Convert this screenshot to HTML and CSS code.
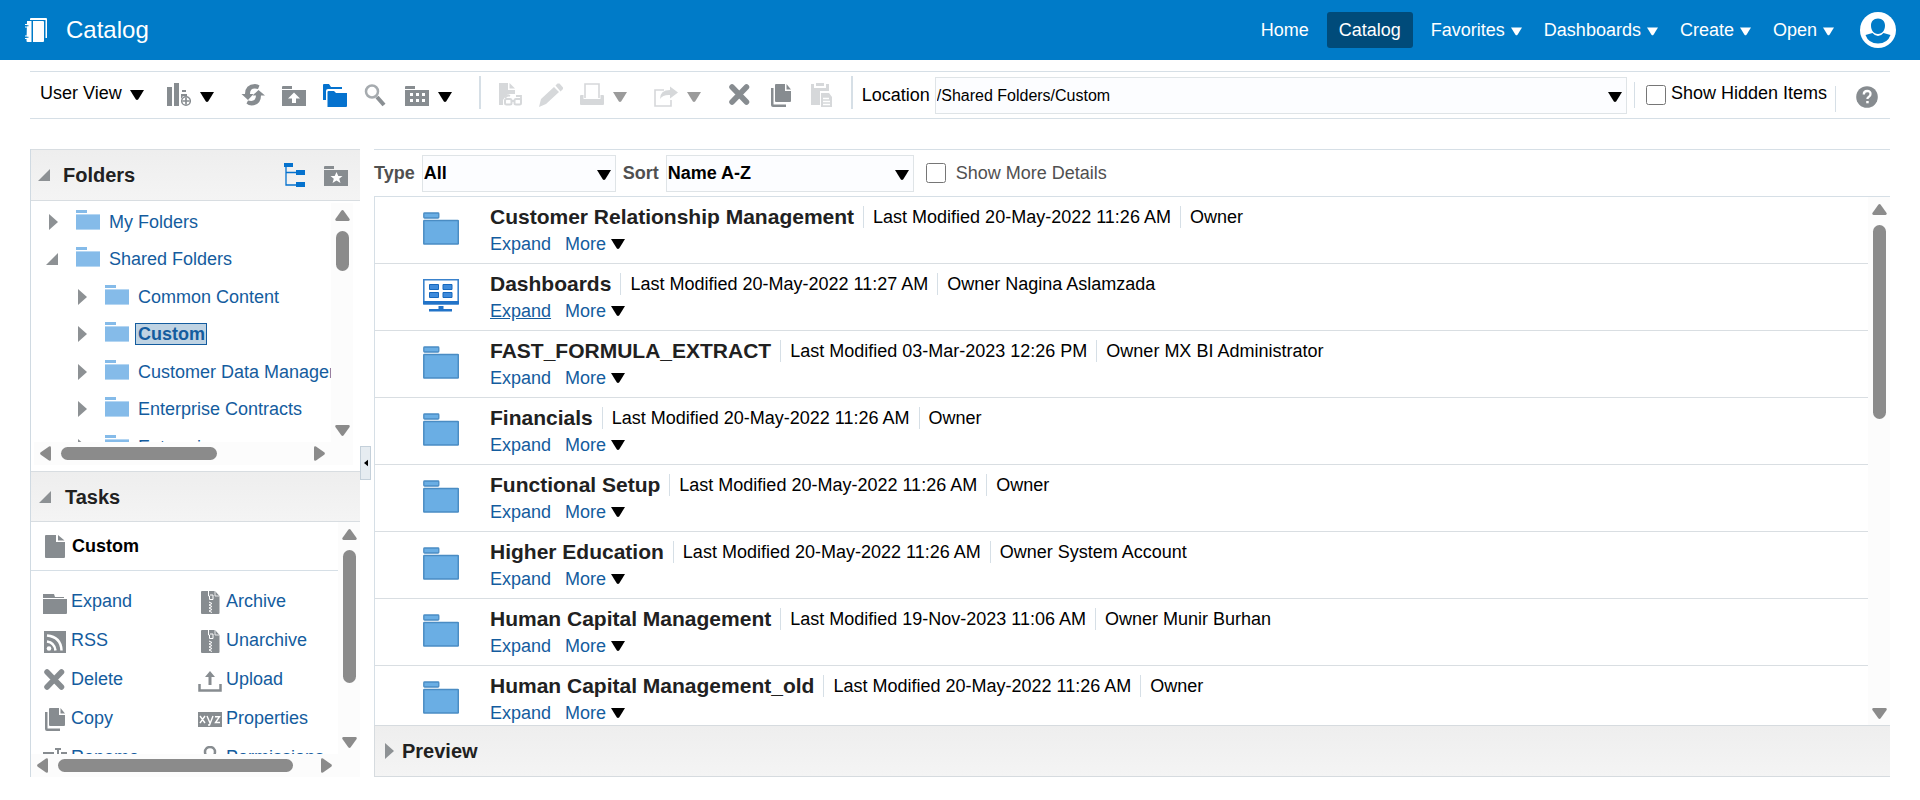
FILE: index.html
```html
<!DOCTYPE html>
<html lang="en">
<head>
<meta charset="utf-8">
<title>Catalog</title>
<link rel="stylesheet" href="styles.css">
</head>
<body>
<svg class="sprite" aria-hidden="true">
  <symbol id="caret" viewBox="0 0 14 10"><path d="M0 0h14L8.300 9.200Q7 10.600 5.700 9.200z"/></symbol>
  <symbol id="right" viewBox="0 0 10 18"><path d="M0 1v16L9 9z"/></symbol>
  <symbol id="open" viewBox="0 0 12 12"><path d="M12 0v12H0z"/></symbol>
  <symbol id="thumb-arrow" viewBox="0 0 15 11"><path d="M6.300.8Q7.500-.6 8.700.8L14.600 9Q15.200 10.900 13.500 11H1.500Q-.2 10.900.4 9z"/></symbol>
  <symbol id="tree-folder" viewBox="0 0 24 20"><path d="M0 0h11v3H0z" fill="#85bbe9"/><path d="M0 4h24v16H0z" fill="#b5d6f2"/><path d="M0 5h24v14H0z" fill="#85bbe9"/></symbol>
  <symbol id="big-folder" viewBox="0 0 36 33"><rect x=".8" y="1" width="15" height="5" rx=".8" fill="#6aaee4" stroke="#4a8cc3" stroke-width="1.300"/><rect x=".8" y="8.500" width="34.500" height="23.500" rx=".5" fill="#6aaee4" stroke="#4a8cc3" stroke-width="1.500"/></symbol>
  <symbol id="delete" viewBox="0 0 24 24"><path d="M4 4l14.500 15m0-15L4 19" stroke="currentColor" stroke-width="5.500" fill="none" stroke-linecap="round"/></symbol>
  <symbol id="copy" viewBox="0 0 24 24"><path d="M6 2q0-1 1-1h9v7h6v10q0 1-1 1H7q-1 0-1-1z"/><path d="M17.500 1l4.500 5.500h-4.500z"/><path d="M2 5h2.500v16.500H17V24H4q-2 0-2-2z"/></symbol>
  <symbol id="zip" viewBox="0 0 24 24"><path d="M4 1h13l4.500 5v17q0 1-1 1H4q-1 0-1-1V2q0-1 1-1z"/><path d="M10.500 1v5h1v3.500h3.500V5h-3" stroke="#fff" fill="none"/><path d="M17 1v5h4.500" stroke="#fff" fill="none" stroke-width=".8"/><path d="M11 12l3 1.500-3 1.500 3 1.500-3 1.500 3 1.500-3 1.500 3 1.500" stroke="#fff" fill="none"/></symbol>
</svg>

<header class="banner">
  <svg class="logo" viewBox="0 0 22 24" aria-hidden="true"><path d="M5 1q0-1 1-1h15q1 0 1 1v19h-1.500V2H5z"/><path d="M2 3h4.500v21H2.500q-1 0-1-1z"/><path d="M8 3h10q1 0 1 1v19q0 1-1 1H8z"/><path d="M0 6.500h4v2.500H0M0 18h4v2.500H0" fill="none" stroke="#fff" stroke-width="1.200"/><path d="M1 7.200h2.500v1H1zM1 18.700h2.500v1H1z" fill="#007bc8"/></svg>
  <h1>Catalog</h1>
  <nav class="nav">
    <a href="#">Home</a>
    <a href="#" class="current">Catalog</a>
    <a href="#" class="menu">Favorites <svg><use href="#caret"/></svg></a>
    <a href="#" class="menu">Dashboards <svg><use href="#caret"/></svg></a>
    <a href="#" class="menu">Create <svg><use href="#caret"/></svg></a>
    <a href="#" class="menu">Open <svg><use href="#caret"/></svg></a>
  </nav>
  <button class="avatar" aria-label="Account"><svg viewBox="0 0 36 36"><circle cx="18" cy="18" r="18" fill="#fff"/><path d="M18 6.500c-4.500 0-7 3-7 7 0 4.500 2.500 8.500 7 8.500s7-4 7-8.500c0-4-2.500-7-7-7zM5.500 23l7-2q2.500 3 5.500 3t5.500-3l7 2Q27.500 31.500 18 31.500T5.500 23z" fill="#007bc8"/></svg></button>
</header>

<div class="toolbar">
  <button class="tool view">User View <svg class="caret"><use href="#caret"/></svg></button>
  <button class="tool menu" aria-label="New"><svg class="icon" viewBox="0 0 24 24"><path d="M0 4h5v19H0zM7 0h5v23H7zM15 7h4v2h-4zM14 11h6v2h-4l-2 3z"/><circle cx="19" cy="18" r="4.300" fill="none" stroke="currentColor" stroke-width="1.500"/><path d="M19 14.500v7M15.500 18h7" stroke="currentColor" stroke-width="1.700"/></svg><svg class="caret"><use href="#caret"/></svg></button>
  <button class="tool" aria-label="Refresh"><svg class="icon" viewBox="0 0 24 24"><path d="M4 11Q4 1.500 14 1q3 0 4.500 1.500L17 6Q9 4 9 11h3.500L7 17 .5 11z"/><path d="M20 12.500Q20 22 10.500 22.500q-3 0-5-2L7 17.500q8 2 8-5h-3.500L17.500 7l6.500 5.500z"/></svg></button>
  <button class="tool" aria-label="Up"><svg class="icon" viewBox="0 0 24 24"><path d="M0 4q0-1 1-1h9v3H0zM0 7h24v16H0z"/><path d="M12 9.500l6 6h-4V20h-4v-4.500H6z" fill="#fff"/></svg></button>
  <button class="tool blue" aria-label="Show folders"><svg class="icon" viewBox="0 0 24 24"><path d="M0 2q0-1 1-1h5l2 3h11v2H5Q3 6 3 8v9H0z"/><path d="M4.500 9q0-1 1-1H11l2 2h11v13q0 1-1 1H4.500z"/></svg></button>
  <button class="tool" aria-label="Search"><svg class="icon" viewBox="0 0 24 24"><circle cx="8" cy="8.500" r="6" fill="none" stroke="#a6abaf" stroke-width="2.500"/><path d="M13 14l7 8" stroke="#8a8f93" stroke-width="4"/></svg></button>
  <button class="tool menu" aria-label="List view"><svg class="icon" viewBox="0 0 24 24"><path d="M0 4q0-1 1-1h9v3H0zM0 7h24v16H0z"/><path d="M5 10h3v3H5zm6 0h3v3h-3zm6 0h3v3h-3zM5 16h3v3H5zm6 0h3v3h-3zm6 0h3v3h-3z" fill="#fff"/></svg><svg class="caret"><use href="#caret"/></svg></button>
  <span class="rule tall"></span>
  <button class="tool" disabled aria-label="Open"><svg class="icon" viewBox="0 0 24 24"><path d="M1 0h9v7h7v4h-5q-3 0-5 3l-2 3v5H1z"/><path d="M11.500 0L17 5.500h-5.500z"/><path d="M7 15q2-3.500 5-2m11 4v-4h-5" fill="none" stroke="currentColor" stroke-width="1.800"/><rect x="7" y="16" width="6.500" height="5.500" rx="1.500" fill="#fff" stroke="currentColor" stroke-width="2"/><rect x="16.500" y="16" width="6.500" height="5.500" rx="1.500" fill="#fff" stroke="currentColor" stroke-width="2"/><path d="M13 17h4v2h-4z"/></svg></button>
  <button class="tool" disabled aria-label="Edit"><svg class="icon" viewBox="0 0 24 24"><path d="M0 24l2-8L15 4l5 5L7 21zM16.500 2.500l2-2h2l3.500 4v1.500l-2.500 2.500z"/></svg></button>
  <button class="tool menu" disabled aria-label="Print"><svg class="icon" viewBox="0 0 24 24"><path d="M5 15V1h14v14" fill="none" stroke="currentColor" stroke-width="1.600"/><path d="M1 12h2.500v4h17v-4H23q1 0 1 1v8q0 1-1 1h-2.500H1q-1 0-1-1v-8q0-1 1-1z"/></svg><svg class="caret"><use href="#caret"/></svg></button>
  <button class="tool menu" disabled aria-label="Export"><svg class="icon" viewBox="0 0 24 24"><path d="M10 7H1v16h16v-6" fill="none" stroke="currentColor" stroke-width="1.600"/><path d="M6 16q0-9 10-9V3.500l8 6-8 6V12q-7-.5-10 4z"/></svg><svg class="caret"><use href="#caret"/></svg></button>
  <button class="tool" aria-label="Delete"><svg class="icon"><use href="#delete"/></svg></button>
  <button class="tool" aria-label="Copy"><svg class="icon"><use href="#copy"/></svg></button>
  <button class="tool" disabled aria-label="Paste"><svg class="icon" viewBox="0 0 24 24"><path d="M1 1h3v4h12V1h3v7h-9v14H1z"/><path d="M6 0h8v3H6z"/><path d="M11 10h8l3 4v10H11z"/><path d="M13 15.500h6m-6 3h7m-7 3h7" stroke="#fff" stroke-width="1.300"/></svg></button>
  <span class="rule tall"></span>
  <label class="location" for="loc">Location</label>
  <span class="select grow"><select id="loc"><option>/Shared Folders/Custom</option></select><svg class="caret"><use href="#caret"/></svg></span>
  <span class="rule"></span>
  <label class="check hidden-items"><input type="checkbox"><span>Show Hidden Items</span></label>
  <span class="rule low"></span>
  <button class="help" aria-label="Help"><svg viewBox="0 0 22 22"><circle cx="11" cy="11" r="10.800" fill="#878c90"/><path d="M7.800 8.500Q7.800 5 11.200 5t3.300 3q0 1.800-1.600 2.700-1.500.8-1.500 2.300" fill="none" stroke="#fff" stroke-width="2.300"/><path d="M10.200 15h2.500v2.300h-2.500z" fill="#fff"/></svg></button>
</div>

<main class="workspace">
  <aside class="side">
    <div class="head">
      <svg class="open"><use href="#open"/></svg><h2>Folders</h2>
      <button class="tool blue" aria-label="Folder tree"><svg class="icon" viewBox="0 0 24 24"><path d="M1 0h9v4H1zM13 7h9v5h-9zM13 19h9v5h-9z"/><path d="M3 4v18h10M3 9.500h10" fill="none" stroke="currentColor" stroke-width="1.300"/></svg></button>
      <button class="tool" aria-label="Favorites"><svg class="icon" viewBox="0 0 24 24"><path d="M0 4q0-1 1-1h9v3H0zM0 7h24v16H0z"/><path d="M12.500 9l1.800 4h4.200l-3.300 2.800 1.300 4.200-4-2.500-4 2.500 1.300-4.200L6.500 13h4.200z" fill="#fff"/></svg></button>
    </div>
    <div class="scroller tree-box">
      <ul class="tree">
        <li><svg class="right"><use href="#right"/></svg><svg class="fold"><use href="#tree-folder"/></svg><a href="#">My Folders</a></li>
        <li><svg class="open"><use href="#open"/></svg><svg class="fold"><use href="#tree-folder"/></svg><a href="#">Shared Folders</a></li>
        <li class="child"><svg class="right"><use href="#right"/></svg><svg class="fold"><use href="#tree-folder"/></svg><a href="#">Common Content</a></li>
        <li class="child"><svg class="right"><use href="#right"/></svg><svg class="fold"><use href="#tree-folder"/></svg><a href="#" class="selected">Custom</a></li>
        <li class="child"><svg class="right"><use href="#right"/></svg><svg class="fold"><use href="#tree-folder"/></svg><a href="#">Customer Data Management</a></li>
        <li class="child"><svg class="right"><use href="#right"/></svg><svg class="fold"><use href="#tree-folder"/></svg><a href="#">Enterprise Contracts</a></li>
        <li class="child"><svg class="right"><use href="#right"/></svg><svg class="fold"><use href="#tree-folder"/></svg><a href="#">Enterprise</a></li>
      </ul>
      <div class="vbar"><svg><use href="#thumb-arrow"/></svg><div class="track"><div class="thumb" style="height:22%"></div></div><svg class="down"><use href="#thumb-arrow"/></svg></div>
      <div class="hbar"><svg class="left"><use href="#thumb-arrow"/></svg><div class="track"><div class="thumb" style="width:64%"></div></div><svg class="next"><use href="#thumb-arrow"/></svg></div>
    </div>
    <div class="head tasks-head"><svg class="open"><use href="#open"/></svg><h2>Tasks</h2></div>
    <div class="scroller">
      <div class="tasks">
        <h3><svg class="icon" viewBox="0 0 24 24"><path d="M2 1h10v7h9v15q0 1-1 1H2q-1 0-1-1V2q0-1 1-1z"/><path d="M14 1l6.500 5.500H14z"/></svg>Custom</h3>
        <ul class="actions">
          <li><svg class="icon" viewBox="0 0 24 24"><path d="M0 4h11l1 3h9v1H0zM0 9h24v14q0 1-1 1H0z"/></svg><a href="#">Expand</a></li>
          <li><svg class="icon"><use href="#zip"/></svg><a href="#">Archive</a></li>
          <li><svg class="icon" viewBox="0 0 24 24"><path d="M1 2h22v22H1z"/><circle cx="6" cy="19.500" r="2.300" fill="#fff"/><path d="M4 12.500q7.500 1 8.500 9M4 6.500q14 1.500 14.500 15" fill="none" stroke="#fff" stroke-width="2.500"/></svg><a href="#">RSS</a></li>
          <li><svg class="icon"><use href="#zip"/></svg><a href="#">Unarchive</a></li>
          <li><svg class="icon"><use href="#delete"/></svg><a href="#">Delete</a></li>
          <li><svg class="icon" viewBox="0 0 24 24"><path d="M12 3l5 6h-3.500v8h-3V9H7z"/><path d="M1.500 16v6.500h21V16" fill="none" stroke="currentColor" stroke-width="2.500"/></svg><a href="#">Upload</a></li>
          <li><svg class="icon"><use href="#copy"/></svg><a href="#">Copy</a></li>
          <li><svg class="icon" viewBox="0 0 24 24"><path d="M0 5h24v15H0z"/><path d="M2 9l5 7m0-7l-5 7M9 9l3 7m3-7l-3.500 9H10M17 9.700h4.500l-4 5.800H22" fill="none" stroke="#fff" stroke-width="1.400"/></svg><a href="#">Properties</a></li>
          <li><svg class="icon" viewBox="0 0 24 24"><path d="M0 6h11v2H2v9h9v2H0zM18 6h6v13h-6v-2h4V8h-4zM12 2h6v2h-2v17h2v1h-6v-1h2V4h-2z"/></svg><a href="#">Rename</a></li>
          <li><svg class="icon" viewBox="0 0 24 24"><circle cx="12" cy="6" r="5" fill="none" stroke="currentColor" stroke-width="2.500"/><path d="M5 11h14v12H5z"/></svg><a href="#">Permissions</a></li>
        </ul>
      </div>
      <div class="vbar"><svg><use href="#thumb-arrow"/></svg><div class="track"><div class="thumb" style="height:75%"></div></div><svg class="down"><use href="#thumb-arrow"/></svg></div>
      <div class="hbar"><svg class="left"><use href="#thumb-arrow"/></svg><div class="track"><div class="thumb" style="width:93%"></div></div><svg class="next"><use href="#thumb-arrow"/></svg></div>
    </div>
  </aside>

  <div class="splitter"><button aria-label="Collapse pane"><svg viewBox="0 0 5 8"><path d="M5 0v8L0 4z"/></svg></button></div>

  <section class="content">
    <div class="filters">
      <label for="type">Type</label>
      <span class="select type"><select id="type"><option>All</option></select><svg class="caret"><use href="#caret"/></svg></span>
      <label for="sort">Sort</label>
      <span class="select sort"><select id="sort"><option>Name A-Z</option></select><svg class="caret"><use href="#caret"/></svg></span>
      <label class="check details"><input type="checkbox"><span>Show More Details</span></label>
    </div>
    <div class="results">
      <ul class="list">
        <li><svg class="item"><use href="#big-folder"/></svg><div><p class="meta"><b>Customer Relationship Management</b><span>Last Modified 20-May-2022 11:26 AM</span><span>Owner</span></p><p class="links"><a href="#">Expand</a><a href="#">More <svg class="caret"><use href="#caret"/></svg></a></p></div></li>
        <li><svg class="item" viewBox="0 0 36 33"><path d="M.8.800h34.400v24H.8z" fill="#fff" stroke="#3a82cc" stroke-width="1.600"/><path d="M0 22h36v2.500q0 1-1 1H1q-1 0-1-1z" fill="#2173c8"/><path d="M15.500 27h5v3h8.500v2.500H6V30h9.500z" fill="#2173c8"/><path d="M6.500 5.500h9v5h-9zm13.500 0h9v5h-9zM6.500 13.500h9v5h-9zm13.500 0h9v5h-9z" fill="#3f8bdb" stroke="#1768bd"/></svg><div><p class="meta"><b>Dashboards</b><span>Last Modified 20-May-2022 11:27 AM</span><span>Owner Nagina Aslamzada</span></p><p class="links"><a href="#" class="active">Expand</a><a href="#">More <svg class="caret"><use href="#caret"/></svg></a></p></div></li>
        <li><svg class="item"><use href="#big-folder"/></svg><div><p class="meta"><b>FAST_FORMULA_EXTRACT</b><span>Last Modified 03-Mar-2023 12:26 PM</span><span>Owner MX BI Administrator</span></p><p class="links"><a href="#">Expand</a><a href="#">More <svg class="caret"><use href="#caret"/></svg></a></p></div></li>
        <li><svg class="item"><use href="#big-folder"/></svg><div><p class="meta"><b>Financials</b><span>Last Modified 20-May-2022 11:26 AM</span><span>Owner</span></p><p class="links"><a href="#">Expand</a><a href="#">More <svg class="caret"><use href="#caret"/></svg></a></p></div></li>
        <li><svg class="item"><use href="#big-folder"/></svg><div><p class="meta"><b>Functional Setup</b><span>Last Modified 20-May-2022 11:26 AM</span><span>Owner</span></p><p class="links"><a href="#">Expand</a><a href="#">More <svg class="caret"><use href="#caret"/></svg></a></p></div></li>
        <li><svg class="item"><use href="#big-folder"/></svg><div><p class="meta"><b>Higher Education</b><span>Last Modified 20-May-2022 11:26 AM</span><span>Owner System Account</span></p><p class="links"><a href="#">Expand</a><a href="#">More <svg class="caret"><use href="#caret"/></svg></a></p></div></li>
        <li><svg class="item"><use href="#big-folder"/></svg><div><p class="meta"><b>Human Capital Management</b><span>Last Modified 19-Nov-2023 11:06 AM</span><span>Owner Munir Burhan</span></p><p class="links"><a href="#">Expand</a><a href="#">More <svg class="caret"><use href="#caret"/></svg></a></p></div></li>
        <li><svg class="item"><use href="#big-folder"/></svg><div><p class="meta"><b>Human Capital Management_old</b><span>Last Modified 20-May-2022 11:26 AM</span><span>Owner</span></p><p class="links"><a href="#">Expand</a><a href="#">More <svg class="caret"><use href="#caret"/></svg></a></p></div></li>
      </ul>
      <div class="vbar"><svg><use href="#thumb-arrow"/></svg><div class="track"><div class="thumb" style="height:41%"></div></div><svg class="down"><use href="#thumb-arrow"/></svg></div>
    </div>
    <div class="preview"><svg class="right"><use href="#right"/></svg><h2>Preview</h2></div>
  </section>
</main>
</body>
</html>
```

FILE: styles.css
```css
* { box-sizing: border-box; }

body {
  margin: 0;
  height: 100vh;
  display: flex;
  flex-direction: column;
  padding-bottom: 23px;
  background: #fff;
  color: #000;
  font: 18px/20px "Liberation Sans", Arial, sans-serif;
}

h1, h2, h3, p, ul { margin: 0; padding: 0; list-style: none; }
a { color: #145c9e; text-decoration: none; }
svg { display: block; flex: none; fill: currentColor; }
button, select, input { font: inherit; color: inherit; margin: 0; }
button { padding: 0; border: 0; background: none; }
.sprite { position: absolute; width: 0; height: 0; }

/* Banner */
.banner {
  display: flex;
  align-items: center;
  flex: none;
  height: 60px;
  padding: 0 24px 0 25px;
  background: #007bc8;
  color: #fff;
}
.logo { width: 22px; height: 24px; }
.banner h1 { margin-left: 19px; font-size: 24px; line-height: 28px; font-weight: normal; }
.nav { display: flex; gap: 6px; margin-left: auto; margin-right: 22px; }
.nav a {
  display: flex;
  align-items: center;
  gap: 6px;
  height: 36px;
  padding: 0 12px;
  border-radius: 3px;
  color: #fff;
}
.nav .current { background: #004b7a; }
.nav .menu { padding: 0 4px 0 12px; }
.nav svg { width: 11px; height: 9px; margin-top: 2px; }
.avatar svg { width: 36px; height: 36px; }

/* Toolbar */
.toolbar {
  display: flex;
  align-items: center;
  flex: none;
  gap: 17px;
  height: 48px;
  margin: 11px 30px 30px;
  padding-left: 10px;
  border: solid #d6dfe6;
  border-width: 1px 0;
}
.icon { width: 24px; height: 24px; }
.caret { width: 14px; height: 10px; color: #000; }
.tool { display: flex; align-items: center; color: #878c90; }
.tool:disabled { color: #d6d8da; }
.tool:disabled .caret { color: #9b9b9b; }
.tool.view { gap: 8px; margin-right: 6px; padding-bottom: 4px; color: #000; }
.tool.view .caret { margin-top: 4px; }
.tool.menu { gap: 9px; margin-right: 10px; }
.tool.menu .caret { margin-top: 4px; }
.tool.blue { color: #0572ce; }
.rule { width: 1px; height: 26px; background: #d6dfe6; }
.rule.tall { width: 2px; height: 33px; margin-top: -5px; }
.rule.low { margin: 8px 3px 0 -9px; }
.location { margin-left: -8px; margin-right: -12px; }

.select { display: grid; align-items: center; }
.select > * { grid-area: 1 / 1; }
.select select {
  width: 100%;
  height: 37px;
  padding: 0 30px 0 1px;
  border: 1px solid #dfe4e7;
  border-radius: 0;
  background: #fcfdff;
  appearance: none;
}
.select .caret { justify-self: end; margin: 3px 5px 0 0; pointer-events: none; }
.grow { flex: 1; margin-right: -10px; }
.grow select { padding-top: 2px; font-size: 16px; }

.check { display: flex; align-items: center; }
.check input { width: 20px; height: 20px; }
.hidden-items { gap: 5px; margin-left: -6px; }
.hidden-items span { padding-bottom: 4px; }
.help { margin-right: 12px; }
.help svg { width: 22px; height: 22px; margin-top: 3px; }

/* Two-pane workspace */
.workspace {
  display: grid;
  grid-template-columns: 330px 14px minmax(0, 1fr);
  grid-template-rows: minmax(0, 1fr);
  flex: 1;
  min-height: 0;
  margin: 0 30px;
}
.side {
  display: grid;
  grid-template-rows: auto minmax(0, 18fr) auto minmax(0, 17fr);
  border-left: 1px solid #d0dae2;
}
.head {
  display: flex;
  align-items: center;
  gap: 17px;
  height: 52px;
  padding: 0 12px 0 7px;
  border: solid #d8dde1;
  border-width: 1px 0;
  background: linear-gradient(#eee, #f4f4f4);
}
.tasks-head { height: 51px; padding-left: 8px; }
h2 { font-size: 20px; line-height: 24px; color: #212121; }
.head h2 { flex: 1; margin-left: -4px; }
.tasks-head h2 { margin-left: -3px; }
.open { width: 12px; height: 12px; color: #8d9194; }
.right { width: 10px; height: 18px; color: #8d9194; }

.scroller {
  display: grid;
  grid-template-columns: minmax(0, 1fr) 22px;
  grid-template-rows: minmax(0, 1fr) 23px;
}
.tree-box { padding: 2px 7px 6px 3px; }
.tree {
  display: grid;
  grid-auto-rows: 37px 38px;
  align-content: start;
  overflow: hidden;
}
.tree li { display: flex; align-items: center; padding-left: 15px; white-space: nowrap; }
.tree .child { padding-left: 44px; }
.tree .fold { width: 24px; height: 20px; margin: 0 7px 4px 17px; }
.tree .open { margin: 0 2px 0 -3px; }
.tree .open + .fold { margin-left: 16px; }
.tree a { padding: 0 1px; border: 1px solid transparent; }
.tree .selected {
  margin-left: -1px;
  padding: 0 1px 0 2px;
  border-color: #145c9e;
  background: #bfd3e3;
  font-weight: bold;
}

/* Scroll bars */
.vbar, .hbar { display: flex; align-items: center; gap: 10px; background: #fcfcfc; color: #8b8b8b; }
.vbar { flex-direction: column; padding: 7px 0 6px; }
.vbar svg, .hbar svg { width: 15px; height: 11px; }
.down { transform: rotate(180deg); }
.hbar { grid-column: 1 / -1; gap: 8px; padding: 0 26px 0 4px; }
.hbar .left { transform: rotate(-90deg); }
.hbar .next { transform: rotate(90deg); }
.track { flex: 1; }
.thumb { border-radius: 7px; background: #8b8b8b; }
.vbar .thumb { width: 13px; }
.hbar .thumb { height: 13px; }

/* Tasks */
.tasks { overflow: hidden; }
.tasks .icon { color: #878c90; }
.tasks h3 {
  display: flex;
  align-items: center;
  gap: 4px;
  height: 49px;
  padding-left: 13px;
  border-bottom: 1px solid #d6dfe6;
  font-size: 18px;
}
.actions {
  display: grid;
  grid-template-columns: 155px minmax(0, 1fr);
  grid-auto-rows: 39px;
  padding: 10px 0 0 12px;
}
.actions li { display: flex; align-items: center; gap: 4px; }
.actions .icon { margin-top: 3px; }

/* Splitter */
.splitter { display: flex; align-items: center; }
.splitter button {
  display: grid;
  place-items: center;
  width: 11px;
  height: 34px;
  border: 1px solid #c4d0da;
  background: #e6ecf1;
}
.splitter svg { width: 4px; height: 8px; }

/* Results pane */
.content { display: flex; flex-direction: column; min-height: 0; }
.filters {
  display: flex;
  align-items: center;
  gap: 7px;
  height: 47px;
  border-top: 1px solid #d6dfe6;
  color: #505050;
  font-weight: bold;
}
.filters .select { color: #000; }
.filters .type { width: 194px; }
.filters .sort { width: 248px; }
.filters .details { gap: 10px; margin-left: 5px; font-weight: normal; }
.results {
  display: grid;
  grid-template-columns: minmax(0, 1fr) 22px;
  grid-template-rows: minmax(0, 1fr);
  flex: 1;
  min-height: 0;
  border: solid #d6dfe6;
  border-width: 1px 0 0 1px;
}
.list { overflow: hidden; }
.list li {
  display: flex;
  gap: 31px;
  padding: 7px 0 5px 48px;
  border-bottom: 1px solid #d9dee2;
}
.item { width: 36px; height: 33px; margin-top: 8px; }
.meta { display: flex; align-items: center; line-height: 26px; }
.meta b { padding-right: 9px; font-size: 21px; color: #212121; }
.meta span { margin-right: 9px; padding-left: 9px; border-left: 1px solid #d6dfe6; line-height: 22px; }
.links { display: flex; gap: 14px; line-height: 28px; }
.links a { display: flex; align-items: center; gap: 5px; }
.links .active { text-decoration: underline; }
.preview {
  display: flex;
  align-items: center;
  gap: 7px;
  height: 52px;
  padding-left: 10px;
  border: 1px solid #d6dbdf;
  border-right: 0;
  background: linear-gradient(#eee, #f4f4f4);
}
```
